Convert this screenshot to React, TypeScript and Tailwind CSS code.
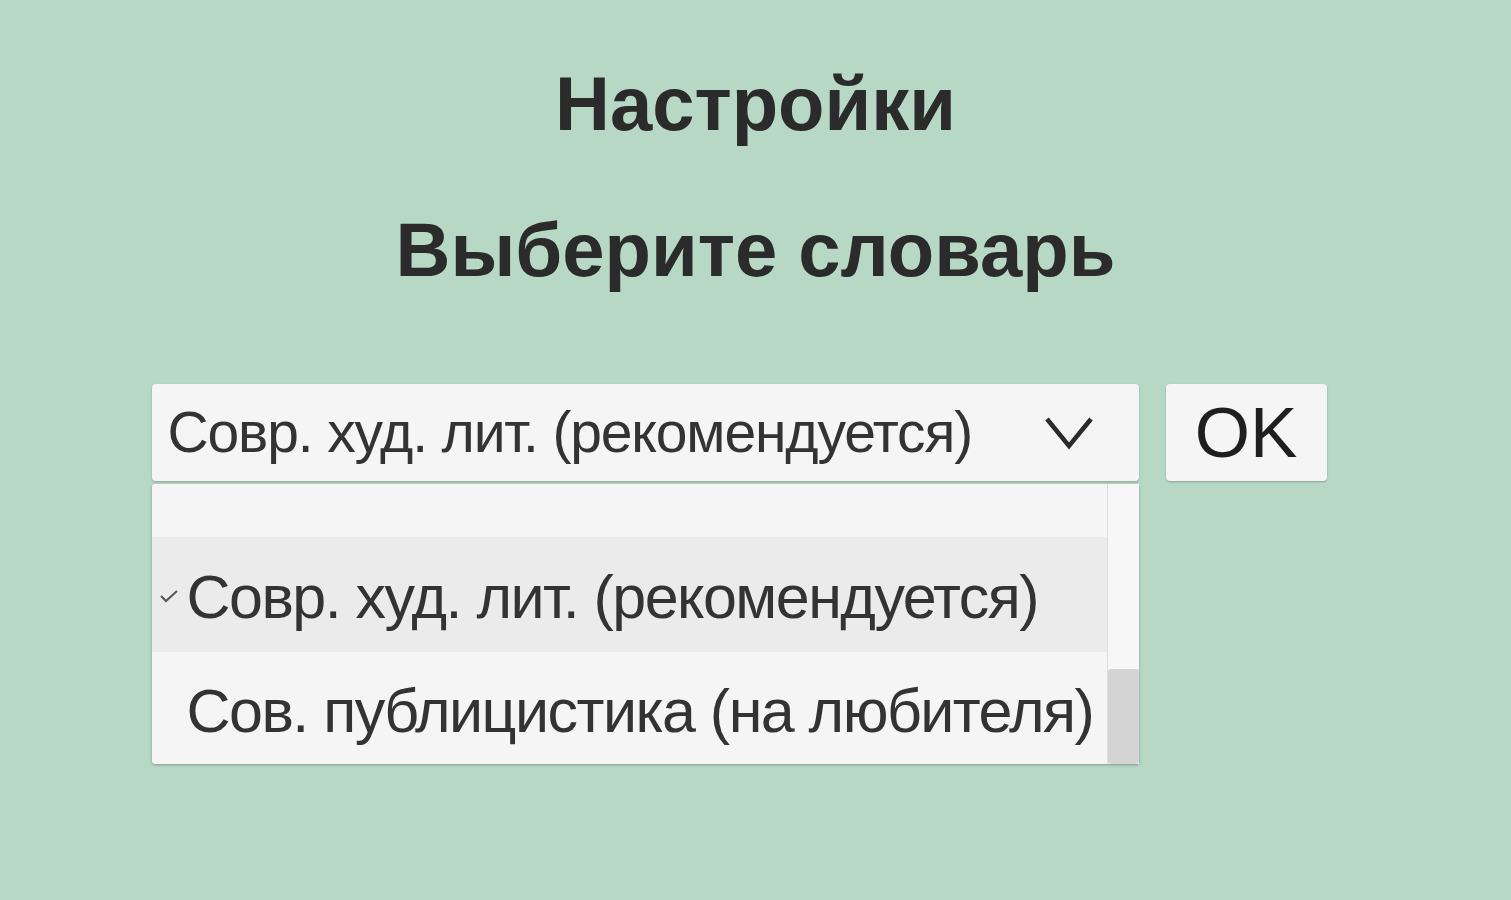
export default function App() {
  const options = [
    { label: "", selected: false },
    { label: "Совр. худ. лит. (рекомендуется)", selected: true },
    { label: "Сов. публицистика (на любителя)", selected: false },
  ];

  return (
    <div className="min-h-[900px] w-full bg-[#b8d8c6] font-['Liberation_Sans',Arial,sans-serif] text-[#2b2b2b]">
      <div className="flex flex-col items-center pt-[66px]">
        <h1 className="text-[76px] font-bold leading-none">Настройки</h1>
        <h2 className="mt-[70px] text-[76px] font-bold leading-none">Выберите словарь</h2>
      </div>

      <div className="mt-[96px] flex justify-center gap-[27px] pr-[33px]">
        <div className="relative w-[987px]">
          <div className="flex h-[97px] items-center justify-between rounded-[4px] bg-[#f5f5f5] pl-[16px] pr-[46px] shadow-[0_1px_2px_rgba(0,0,0,0.25)]">
            <span className="whitespace-nowrap text-[57px] leading-none tracking-[-0.02em] text-[#333]">
              Совр. худ. лит. (рекомендуется)
            </span>
            <svg width="48" height="36" viewBox="0 0 48 36" fill="none">
              <path d="M2 4 L24 31 L46 4" stroke="#2b2b2b" strokeWidth="4.5" strokeLinejoin="miter" />
            </svg>
          </div>

          <div className="absolute left-0 top-[100px] flex h-[280px] w-full rounded-[3px] bg-[#f5f5f5] shadow-[0_1px_3px_rgba(0,0,0,0.3)]">
            <div className="flex flex-1 flex-col">
              {options.map((o, i) => (
                <div
                  key={i}
                  className={
                    i === 0
                      ? "h-[53px]"
                      : i === 1
                        ? "flex h-[115px] items-center bg-[#ebebeb]"
                        : "flex h-[112px] items-center"
                  }
                >
                  {o.label && (
                    <>
                      <span className="flex w-[35px] justify-end pr-[9px] pt-[4px]">
                        {o.selected && (
                          <svg width="18" height="13" viewBox="0 0 18 13" fill="none">
                            <path d="M1 6 L6 11 L17 1" stroke="#555" strokeWidth="2" />
                          </svg>
                        )}
                      </span>
                      <span className="whitespace-nowrap pt-[6px] text-[61px] leading-none tracking-[-0.025em] text-[#333]">
                        {o.label}
                      </span>
                    </>
                  )}
                </div>
              ))}
            </div>
            <div className="flex w-[32px] flex-col border-l border-[#dcdcdc] bg-[#f7f7f7]">
              <div className="h-[185px]" />
              <div className="flex-1 rounded-[3px] bg-[#d4d4d4]" />
            </div>
          </div>
        </div>

        <button className="flex h-[97px] w-[161px] items-center justify-center rounded-[4px] bg-[#f5f5f5] shadow-[0_1px_2px_rgba(0,0,0,0.25)]">
          <span className="text-[71px] leading-none text-[#1f1f1f]">OK</span>
        </button>
      </div>
    </div>
  );
}
